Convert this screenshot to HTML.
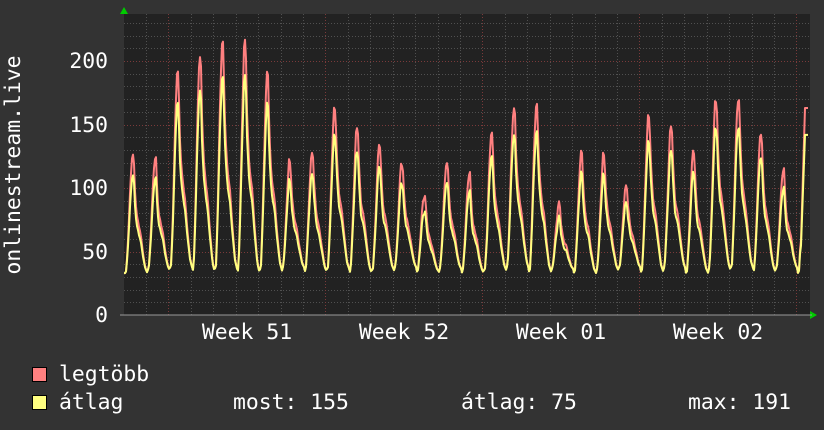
<!DOCTYPE html>
<html><head><meta charset="utf-8"><style>
html,body{margin:0;padding:0;background:#333;}
svg{display:block;}
text{font-family:"DejaVu Sans Mono","Liberation Mono",monospace;fill:#fff;font-size:21.4px;}
</style></head><body>
<svg id="s" width="824" height="430" xmlns="http://www.w3.org/2000/svg">
<rect width="824" height="430" fill="#333"/>
<rect x="124" y="14" width="686" height="301" fill="#222"/>
<g id="grid"></g>
<g id="data"></g>
<path d="M120 14 L128 14 L124 7 Z" fill="#0c0"/>
<path d="M810 311 L810 319 L817 315 Z" fill="#0c0"/>
<line x1="120" y1="315" x2="812" y2="315" stroke="#999" stroke-width="1"/>
<text x="108" y="68" text-anchor="end">200</text>
<text x="108" y="132" text-anchor="end">150</text>
<text x="108" y="195" text-anchor="end">100</text>
<text x="108" y="259" text-anchor="end">50</text>
<text x="108" y="322" text-anchor="end">0</text>
<text transform="translate(20,165) rotate(-90)" text-anchor="middle">onlinestream.live</text>
<text x="247" y="339" text-anchor="middle">Week 51</text>
<text x="404" y="339" text-anchor="middle">Week 52</text>
<text x="561" y="339" text-anchor="middle">Week 01</text>
<text x="718" y="339" text-anchor="middle">Week 02</text>
<rect x="32.5" y="367.5" width="14" height="14" fill="#ff8080" stroke="#000"/>
<rect x="32.5" y="395.5" width="14" height="14" fill="#ffff80" stroke="#000"/>
<text x="59" y="381">legtöbb</text>
<text x="59" y="409">átlag</text>
<text x="233" y="409">most: 155</text>
<text x="461" y="409">átlag: 75</text>
<text x="688" y="409">max: 191</text>
</svg>
<script>
var NS="http://www.w3.org/2000/svg";
var g=document.getElementById('grid'),d=document.getElementById('data');
function ln(x1,y1,x2,y2,c,da){var l=document.createElementNS(NS,'line');l.setAttribute('x1',x1);l.setAttribute('y1',y1);l.setAttribute('x2',x2);l.setAttribute('y2',y2);l.setAttribute('stroke',c);l.setAttribute('stroke-width',1);if(da)l.setAttribute('stroke-dasharray',da);g.appendChild(l);}
for(var v=10;v<=230;v+=10){var y=Math.round(315-v*1.27)+0.5;ln(124,y,810,y,v%50==0?'#7a3a3a':'#505050','1,2');}
for(var x=146;x<810;x+=22.43){var xx=Math.round(x)+0.5;var r=((xx-168)%157+157)%157;var maj=r<3||r>154;ln(xx,14,xx,315,maj?'#7a3a3a':'#505050','1,2');}
var peaks=[126,122,190,203,214,214,188,120,128,163,147,133,120,95,120,110,142,163,165,87,126,125,102,157,148,128,170,171,143,113,163];
var P=[[0,0],[0.06,0.02],[0.14,0.3],[0.24,0.75],[0.31,1],[0.38,1],[0.44,0.7],[0.52,0.5],[0.6,0.42],[0.68,0.35],[0.78,0.2],[0.9,0.05],[1,0]];
function f(t){for(var i=1;i<P.length;i++){if(t<=P[i][0]){var a=P[i-1],b=P[i];return a[1]+(b[1]-a[1])*(t-a[0])/(b[0]-a[0]);}}return 0;}
function build(scale,col){var p='';for(var x=124;x<=808;x++){var k=(x-125)/22.43;var i=Math.floor(k);var t=k-i;if(i<0){i=0;t=0}if(i>=peaks.length)i=peaks.length-1;var pk=peaks[i];var mn=33+((i*7)%5);var ft=f(t);var n=(Math.sin(x*1.7)*2+Math.sin(x*0.9)*1.5)*ft;var v=mn+(pk*scale-mn)*ft+n;if(x>=801)v=mn+(pk*scale-mn)*Math.min(1,(x-800)/5);var y=315-v*1.27;p+=(p?'L':'M')+x+' '+y.toFixed(1);}var e=document.createElementNS(NS,'path');e.setAttribute('d',p);e.setAttribute('fill','none');e.setAttribute('stroke',col);e.setAttribute('stroke-width',2);e.setAttribute('stroke-linejoin','round');d.appendChild(e);}
build(1,'#ff8080');build(0.87,'#ffff80');
</script>
</body></html>
